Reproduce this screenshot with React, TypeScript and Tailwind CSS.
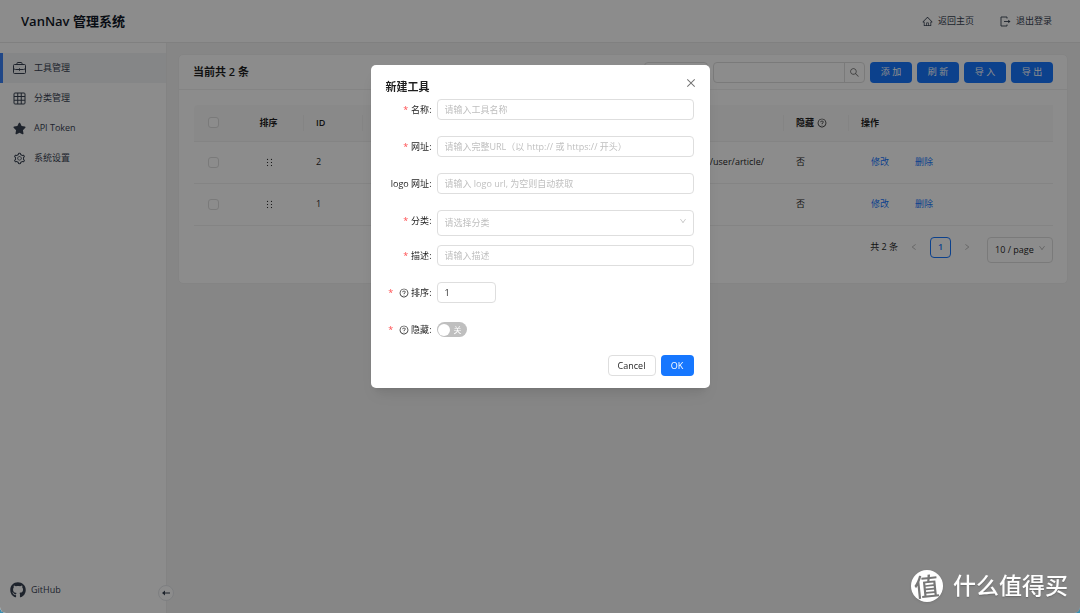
import { useState, type FormEvent, type ReactNode } from "react";
import {
  AiOutlineClose,
  AiOutlineDown,
  AiOutlineHolder,
  AiOutlineHome,
  AiOutlineLeft,
  AiOutlineQuestionCircle,
  AiOutlineRight,
  AiOutlineSearch,
  AiOutlineSetting,
} from "react-icons/ai";
import { FaGithub, FaStar } from "react-icons/fa";

interface Tool {
  id: number;
  url: string;
  hide: boolean;
}

const tools: Tool[] = [
  { id: 2, url: "https://zhiyou.smzdm.com/user/article/", hide: false },
  { id: 1, url: "", hide: false },
];

function BriefcaseIcon() {
  return (
    <svg width="13" height="13" viewBox="0 0 26 26" fill="none" stroke="currentColor" strokeWidth="2">
      <rect x="1" y="5" width="24" height="18" rx="2" />
      <path d="M8 5V2.500A1.500 1.500 0 0 1 9.500 1h7A1.500 1.500 0 0 1 18 2.500V5M1 11c0 2.500 1.500 4 4 4h16c2.500 0 4-1.500 4-4M13 12.500v5" />
    </svg>
  );
}

function TableIcon() {
  return (
    <svg width="13" height="13" viewBox="0 0 26 26" fill="none" stroke="currentColor" strokeWidth="2">
      <rect x="2" y="2" width="22" height="22" rx="2" />
      <path d="M2 9h22M2 16.500h22M9.500 2v22M16.500 2v22" />
    </svg>
  );
}

function LogoutIcon() {
  return (
    <svg width="11" height="11" viewBox="0 0 22 22" fill="none" stroke="currentColor" strokeWidth="1.8">
      <path d="M14 5V2H2v18h12v-3M8 11h11" />
      <path d="M16.500 7.500 21 11l-4.500 3.500z" fill="currentColor" stroke="none" />
    </svg>
  );
}

const menu = [
  { label: "工具管理", icon: <BriefcaseIcon />, active: true },
  { label: "分类管理", icon: <TableIcon />, active: false },
  { label: "API Token", icon: <FaStar size={13} />, active: false },
  { label: "系统设置", icon: <AiOutlineSetting size={13} />, active: false },
];

function Header() {
  return (
    <header className="flex h-[43px] shrink-0 items-center justify-between border-b border-[#eaeaea] bg-white pr-7 pl-[21px] text-[#374151]">
      <h1 className="text-[13px] font-semibold text-[#111827]">VanNav 管理系统</h1>
      <nav className="flex gap-[26px]">
        <a href="#home" className="flex items-center gap-[5px]">
          <AiOutlineHome size={11} />
          返回主页
        </a>
        <a href="#logout" className="flex items-center gap-[5px]">
          <LogoutIcon />
          退出登录
        </a>
      </nav>
    </header>
  );
}

function Sidebar() {
  return (
    <aside className="relative flex w-[167px] shrink-0 flex-col justify-between border-r border-[#eeeeee] bg-white pt-[10px] pb-[15px] text-[#374151]">
      <nav>
        {menu.map((item) => (
          <a
            key={item.label}
            href="#menu"
            className={
              item.active
                ? "flex h-[30px] items-center gap-2 border-l-3 border-[#3b82f6] bg-[#f3f4f6] pl-[10px]"
                : "flex h-[30px] items-center gap-2 border-l-3 border-transparent pl-[10px]"
            }
          >
            {item.icon}
            {item.label}
          </a>
        ))}
      </nav>
      <a href="#github" className="flex items-center gap-[5px] pl-[10px]">
        <FaGithub size={16} />
        GitHub
      </a>
      <button
        type="button"
        aria-label="收起"
        className="absolute -right-2 bottom-3 flex size-4 items-center justify-center rounded-full border border-[#e5e7eb] bg-white"
      >
        <svg width="8" height="6" viewBox="0 0 16 12" fill="currentColor">
          <path d="M0 6l6-5v4h10v2H6v4z" />
        </svg>
      </button>
    </aside>
  );
}

function PrimaryButton({ children }: { children: ReactNode }) {
  return (
    <button type="button" className="h-[21px] w-[42px] rounded bg-[#1677ff] text-center text-white">
      {children}
    </button>
  );
}

function Toolbar() {
  return (
    <div className="flex h-[35px] items-center justify-between border-b border-[#f0f0f0] px-[14px]">
      <h2 className="text-[11px] font-semibold">当前共 2 条</h2>
      <div className="flex gap-[5px]">
        <select aria-label="分类" className="h-[21px] w-16 appearance-none rounded border border-[#dedede] bg-white" />
        <div className="flex h-[21px] w-[152px] rounded border border-[#dedede]">
          <input aria-label="搜索" className="min-w-0 flex-1 px-2 outline-none" />
          <button
            type="button"
            aria-label="搜索"
            className="flex w-5 items-center justify-center border-l border-[#dedede] text-[#737373]"
          >
            <AiOutlineSearch size={11} />
          </button>
        </div>
        <PrimaryButton>添 加</PrimaryButton>
        <PrimaryButton>刷 新</PrimaryButton>
        <PrimaryButton>导 入</PrimaryButton>
        <PrimaryButton>导 出</PrimaryButton>
      </div>
    </div>
  );
}

function Checkbox({ label }: { label: string }) {
  return (
    <input
      type="checkbox"
      aria-label={label}
      className="block size-[11px] appearance-none rounded-[3px] border border-[#dedede] bg-white"
    />
  );
}

function HeadCell({ children, divider = true }: { children: ReactNode; divider?: boolean }) {
  return (
    <th className="p-0 font-semibold">
      <div
        className={
          divider
            ? "flex h-4 items-center gap-[3px] border-r border-[#f0f0f0] pl-3"
            : "flex h-4 items-center gap-[3px] pl-3"
        }
      >
        {children}
      </div>
    </th>
  );
}

function ToolTable() {
  return (
    <table className="w-full table-fixed text-left">
      <colgroup>
        <col className="w-10" />
        <col className="w-[70px]" />
        <col className="w-[59px]" />
        <col />
        <col className="w-[65px]" />
        <col className="w-[204px]" />
      </colgroup>
      <thead>
        <tr className="h-9 border-b border-[#f0f0f0] bg-[#fafafa]">
          <th className="rounded-tl p-0 pl-[14px]">
            <Checkbox label="全选" />
          </th>
          <th className="p-0 font-semibold">
            <div className="flex h-4 items-center justify-center border-r border-[#f0f0f0]">排序</div>
          </th>
          <HeadCell>ID</HeadCell>
          <HeadCell>网址</HeadCell>
          <HeadCell>
            隐藏
            <AiOutlineQuestionCircle size={10} />
          </HeadCell>
          <HeadCell divider={false}>操作</HeadCell>
        </tr>
      </thead>
      <tbody>
        {tools.map((tool) => (
          <tr key={tool.id} className="h-[42px] border-b border-[#f0f0f0]">
            <td className="p-0 pl-[14px]">
              <Checkbox label={`选择 ${tool.id}`} />
            </td>
            <td className="p-0">
              <AiOutlineHolder size={11} className="mx-auto" />
            </td>
            <td className="p-0 pl-3">{tool.id}</td>
            <td className="p-0 pr-5 text-right">{tool.url}</td>
            <td className="p-0 pl-3">{tool.hide ? "是" : "否"}</td>
            <td className="p-0 pl-[22px] text-[#1677ff]">
              <div className="flex gap-[26px]">
                <button type="button">修改</button>
                <button type="button">删除</button>
              </div>
            </td>
          </tr>
        ))}
      </tbody>
    </table>
  );
}

function Pagination() {
  return (
    <div className="mt-[11px] flex justify-end">
      <span className="mr-[10px] leading-[20px]">共 2 条</span>
      <button type="button" aria-label="上一页" className="flex h-[21px] w-3 items-center justify-center text-[#b0b0b0]">
        <AiOutlineLeft size={8} />
      </button>
      <button
        type="button"
        className="mx-[10px] h-[21px] w-[21px] rounded border border-[#1677ff] font-semibold text-[#1677ff]"
      >
        1
      </button>
      <button type="button" aria-label="下一页" className="flex h-[21px] w-3 items-center justify-center text-[#b0b0b0]">
        <AiOutlineRight size={8} />
      </button>
      <div className="relative ml-[14px]">
        <select
          aria-label="每页条数"
          className="h-[26px] w-[66px] appearance-none rounded border border-[#dedede] bg-white pl-[7px]"
        >
          <option>10 / page</option>
        </select>
        <AiOutlineDown size={8} className="absolute top-[7px] right-[7px] text-[#b0b0b0]" />
      </div>
    </div>
  );
}

interface FieldProps {
  id: string;
  label: string;
  required?: boolean;
  help?: boolean;
  children: ReactNode;
}

function Field({ id, label, required = true, help = false, children }: FieldProps) {
  return (
    <div className="flex items-start">
      <label htmlFor={id} className="flex h-[21px] w-[51px] items-center justify-end pr-[5px] whitespace-nowrap">
        {required && (
          <span className={help ? "mr-[6px] text-[#ff4d4f]" : "mr-[3px] text-[#ff4d4f]"}>*</span>
        )}
        {help && <AiOutlineQuestionCircle size={10} className="mr-[2px]" />}
        {label}:
      </label>
      {children}
    </div>
  );
}

const inputClass =
  "h-[21px] w-full min-w-0 flex-1 rounded border border-[#dedede] px-[7px] outline-none placeholder:text-[#bfbfbf]";

function CreateToolModal({ onClose }: { onClose: () => void }) {
  const [hidden, setHidden] = useState(false);

  function handleSubmit(e: FormEvent) {
    e.preventDefault();
    onClose();
  }

  return (
    <div className="fixed inset-0 z-10 flex items-start justify-center rounded-b-md bg-black/45 pt-[65px]">
      <div
        role="dialog"
        aria-labelledby="modal-title"
        className="relative w-[339px] rounded-[5px] bg-white pt-3 pr-4 pb-3 pl-[15px] shadow-lg"
      >
        <h2 id="modal-title" className="mb-[2px] text-[11px] leading-5 font-semibold">
          新建工具
        </h2>
        <button
          type="button"
          aria-label="Close"
          onClick={onClose}
          className="absolute top-[11px] right-3 flex size-[14px] items-center justify-center text-[#737373]"
        >
          <AiOutlineClose size={12} />
        </button>
        <form onSubmit={handleSubmit}>
          <div className="flex flex-col gap-4">
            <Field id="name" label="名称">
              <input id="name" placeholder="请输入工具名称" className={inputClass} />
            </Field>
            <Field id="url" label="网址">
              <input id="url" placeholder="请输入完整URL（以 http:// 或 https:// 开头）" className={inputClass} />
            </Field>
            <Field id="logo" label="logo 网址" required={false}>
              <input id="logo" placeholder="请输入 logo url, 为空则自动获取" className={inputClass} />
            </Field>
            <div className="-mb-[7px]">
              <Field id="category" label="分类">
                <div className="relative flex-1">
                  <select
                    id="category"
                    className="h-[26px] w-full appearance-none rounded border border-[#dedede] bg-white px-[7px] text-[#bfbfbf] outline-none"
                  >
                    <option>请选择分类</option>
                  </select>
                  <AiOutlineDown size={8} className="absolute top-[7px] right-[7px] text-[#bfbfbf]" />
                </div>
              </Field>
            </div>
            <Field id="desc" label="描述">
              <input id="desc" placeholder="请输入描述" className={inputClass} />
            </Field>
            <Field id="sort" label="排序" help>
              <input
                id="sort"
                defaultValue="1"
                className="h-[21px] w-[59px] rounded border border-[#dedede] px-[7px] outline-none"
              />
            </Field>
            <Field id="hide" label="隐藏" help>
              <button
                id="hide"
                type="button"
                role="switch"
                aria-checked={hidden}
                onClick={() => setHidden(!hidden)}
                className={
                  hidden
                    ? "mt-[3px] flex h-[15px] w-[30px] flex-row-reverse items-center justify-between rounded-full bg-[#1677ff] px-[2px] text-[8px] text-white"
                    : "mt-[3px] flex h-[15px] w-[30px] items-center justify-between rounded-full bg-[#bfbfbf] pr-[5px] pl-px text-[8px] text-white"
                }
              >
                <span className="size-3 rounded-full bg-white" />
                {hidden ? "开" : "关"}
              </button>
            </Field>
          </div>
          <div className="mt-[15px] flex justify-end gap-[5px]">
            <button type="button" onClick={onClose} className="h-[21px] w-12 rounded border border-[#dedede]">
              Cancel
            </button>
            <button type="submit" className="h-[21px] w-[33px] rounded bg-[#1677ff] text-white">
              OK
            </button>
          </div>
        </form>
      </div>
    </div>
  );
}

function Watermark() {
  return (
    <div className="fixed right-3 bottom-[11px] z-20 flex items-center gap-[10px] text-white">
      <span className="flex size-8 items-center justify-center rounded-full bg-white text-[25px] font-medium text-[#777777] shadow">
        <span className="-rotate-6 leading-none">值</span>
      </span>
      <span className="pb-[2px] text-[23px] leading-[30px] font-medium text-shadow-sm">什么值得买</span>
    </div>
  );
}

export default function App() {
  const [isOpen, setIsOpen] = useState(true);

  return (
    <div className="bg-[#3f8fb0] font-['Open_Sans','Noto_Sans_CJK_SC',sans-serif] text-[9px] leading-[14px] text-[#1f1f1f]">
      <div className="flex min-h-screen flex-col overflow-hidden rounded-b-md bg-[#f5f5f5]">
        <Header />
        <div className="flex flex-1">
          <Sidebar />
          <main className="min-w-0 flex-1 px-3 pt-[11px] pl-[11px]">
            <section className="rounded-[5px] border border-[#f0f0f0] bg-white">
              <Toolbar />
              <div className="pt-[15px] pr-[14px] pb-5 pl-[15px]">
                <ToolTable />
                <Pagination />
              </div>
            </section>
          </main>
        </div>
      </div>
      {isOpen && <CreateToolModal onClose={() => setIsOpen(false)} />}
      <Watermark />
    </div>
  );
}
